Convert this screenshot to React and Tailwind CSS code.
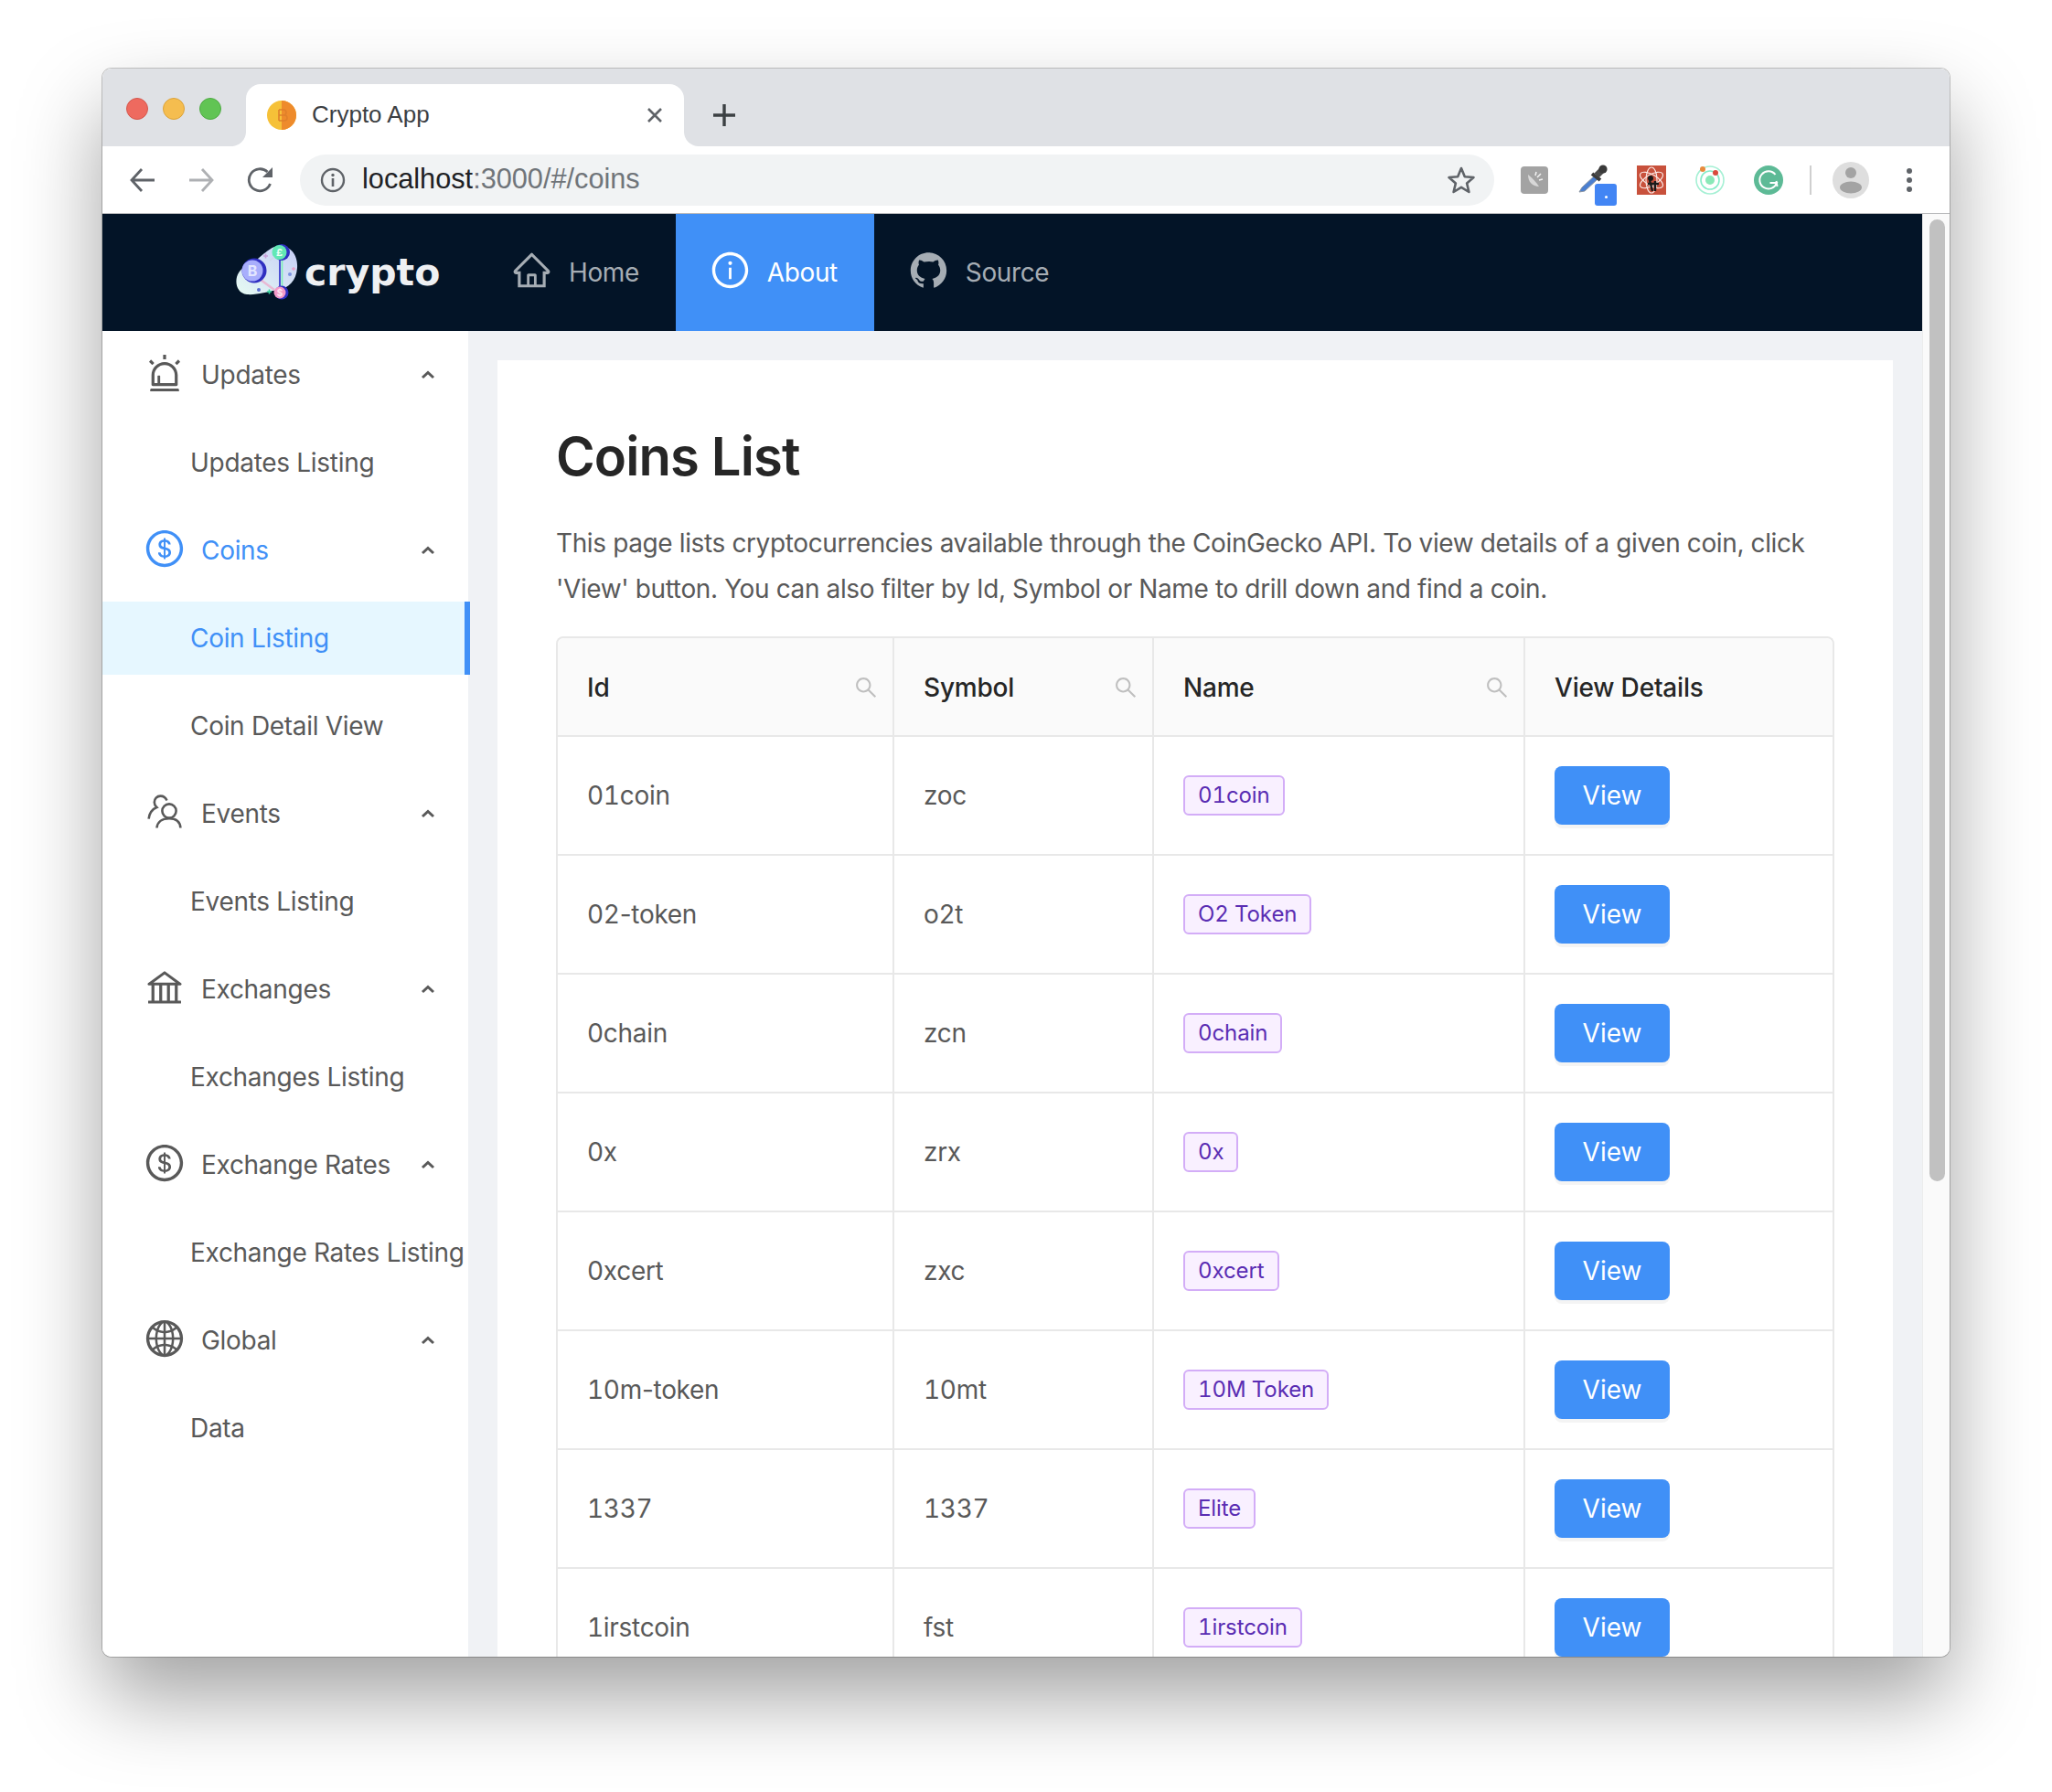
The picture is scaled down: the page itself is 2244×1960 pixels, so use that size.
import React from "react";
import { AiOutlineHome, AiOutlineInfoCircle, AiFillGithub, AiOutlineAlert, AiOutlineDollarCircle, AiOutlineBank, AiOutlineGlobal, AiOutlineSearch } from "react-icons/ai";

const Chevron = () => (
  <svg width="16" height="10" viewBox="0 0 16 10" fill="none" className="shrink-0">
    <path d="M2 8 L8 2.5 L14 8" stroke="#595959" strokeWidth="3" />
  </svg>
);

const EventsIcon = ({ className }) => (
  <svg viewBox="0 0 46 46" fill="none" stroke="currentColor" strokeWidth="2.6" className={className}>
    <g transform="translate(4 4)">
      <circle cx="24" cy="18" r="7.6" />
      <path d="M10.5 36.5 C11 30 16 26.2 24 26.2 C32 26.2 36 30 36.4 36.5" />
      <path d="M21.5 6.5 C20 3 17.5 1.6 14.5 1.6 C10.6 1.6 7.8 4.6 7.8 8.4 C7.8 10.6 8.8 12.6 10.4 14 C5.6 16 2.4 20.4 1.6 26.6" />
    </g>
  </svg>
);

const groups = [
  { label: "Updates", Icon: AiOutlineAlert, sub: "Updates Listing" },
  { label: "Coins", Icon: AiOutlineDollarCircle, sub: "Coin Listing", active: true, extra: "Coin Detail View" },
  { label: "Events", Icon: EventsIcon, sub: "Events Listing" },
  { label: "Exchanges", Icon: AiOutlineBank, sub: "Exchanges Listing" },
  { label: "Exchange Rates", Icon: AiOutlineDollarCircle, sub: "Exchange Rates Listing" },
  { label: "Global", Icon: AiOutlineGlobal, sub: "Data" },
];

const rows = [
  ["01coin", "zoc", "01coin"],
  ["02-token", "o2t", "O2 Token"],
  ["0chain", "zcn", "0chain"],
  ["0x", "zrx", "0x"],
  ["0xcert", "zxc", "0xcert"],
  ["10m-token", "10mt", "10M Token"],
  ["1337", "1337", "Elite"],
  ["1irstcoin", "fst", "1irstcoin"],
];

const GRID = "grid grid-cols-[368px_284px_406px_1fr]";

const Logo = () => (
  <svg width="68" height="62" viewBox="0 0 68 62" className="shrink-0">
    <defs>
      <linearGradient id="blob" x1="0" y1="1" x2="1" y2="0">
        <stop offset="0" stopColor="#e6fbf3" />
        <stop offset="1" stopColor="#c6cdf7" />
      </linearGradient>
    </defs>
    <path d="M48 2 C60 2 68 12 67 26 C66 40 58 48 46 50 C34 52 22 56 12 55 C2 54 -1 44 1 36 C3 28 10 24 18 20 C28 15 36 2 48 2 Z" fill="url(#blob)" />
    <line x1="48" y1="14" x2="48" y2="48" stroke="#3c3fd0" strokeWidth="1.8" />
    <line x1="50.5" y1="16" x2="50.5" y2="46" stroke="#7df0b8" strokeWidth="1.6" />
    <line x1="27" y1="39" x2="42" y2="50" stroke="#e8b9d4" strokeWidth="2.5" />
    <circle cx="20" cy="29" r="13.5" fill="#2f2fc0" />
    <circle cx="18" cy="29" r="11.5" fill="#a8aefc" />
    <text x="18" y="35" textAnchor="middle" fontSize="16" fontWeight="700" fill="#e3e6ff" fontFamily="Inter, sans-serif">B</text>
    <circle cx="50" cy="9" r="9" fill="#2f2fc0" />
    <circle cx="47.5" cy="9" r="8" fill="#62e8b4" />
    <text x="47.5" y="13" textAnchor="middle" fontSize="11" fontWeight="700" fill="#eafff6" fontFamily="Inter, sans-serif">£</text>
    <circle cx="50" cy="53" r="7.5" fill="#2f2fc0" />
    <circle cx="48" cy="53" r="6.5" fill="#f49ac8" />
    <text x="48" y="57" textAnchor="middle" fontSize="10" fontWeight="700" fill="#ffe6f3" fontFamily="Inter, sans-serif">$</text>
    <circle cx="25" cy="50" r="2" fill="#5a6fd0" />
    <path d="M34 52 h5 M36.5 49.5 v5" stroke="#3dd6a0" strokeWidth="1.6" />
    <path d="M30 13 h5 M32.5 10.5 v5" stroke="#c9a0d8" strokeWidth="1.6" />
    <circle cx="59" cy="33" r="2" fill="#7c93e0" />
    <path d="M37 18 L42 14" stroke="#cfd6ea" strokeWidth="1.2" />
    <path d="M61 27 h4 M63 25 v4" stroke="#e8a0c8" strokeWidth="1.4" />
  </svg>
);

const TrafficLight = ({ color, edge }) => (
  <span className={`w-6 h-6 rounded-full border ${color} ${edge}`} />
);

function BrowserChrome() {
  return (
    <>
      <div className="flex h-[85px] bg-white shrink-0">
        <div className="w-[157px] h-full bg-[#dfe1e5] rounded-br-[16px] flex items-start gap-4 pl-[26px] pt-[32px]">
          <TrafficLight color="bg-[#ee6a5f]" edge="border-[#d5574d]" />
          <TrafficLight color="bg-[#f5bd4f]" edge="border-[#dca33a]" />
          <TrafficLight color="bg-[#61c454]" edge="border-[#4fab44]" />
        </div>
        <div className="w-[479px] h-full bg-[#dfe1e5]">
          <div className="h-[68px] mt-[17px] bg-white rounded-t-[16px] flex items-center pl-[23px] pr-[22px]">
            <svg width="32" height="32" viewBox="0 0 32 32" className="shrink-0">
              <circle cx="16" cy="16" r="16" fill="#f6c138" />
              <path d="M16 0 A16 16 0 0 1 16 32 Z" fill="#ee8b2c" />
              <path d="M13 10 h5 a3 3 0 0 1 0 6 h-5 M13 16 h6 a3 3 0 0 1 0 6 h-6 M13 10 v12" fill="none" stroke="#e0802a" strokeWidth="1.6" />
            </svg>
            <span className="ml-[17px] -mt-[2px] flex-1 text-[26px] leading-none text-[#3c4043] font-['Liberation_Sans',sans-serif]">Crypto App</span>
            <svg width="18" height="18" viewBox="0 0 18 18" className="shrink-0 mr-[1px]">
              <path d="M2 2 L16 16 M16 2 L2 16" stroke="#5f6368" strokeWidth="2.6" />
            </svg>
          </div>
        </div>
        <div className="flex-1 h-full bg-[#dfe1e5] rounded-bl-[16px] flex items-center pl-[31px] pt-[17px]">
          <svg width="26" height="26" viewBox="0 0 26 26">
            <path d="M13 1 V25 M1 13 H25" stroke="#3c4043" strokeWidth="3.4" />
          </svg>
        </div>
      </div>
      <div className="flex items-center h-[74px] bg-white border-b border-[#b9babc] shrink-0">
        <svg width="30" height="30" viewBox="0 0 30 30" className="ml-[29px] shrink-0" fill="none" stroke="#5f6368" strokeWidth="2.8">
          <path d="M28 15 H3 M14 3 L3 15 L14 27" />
        </svg>
        <svg width="30" height="30" viewBox="0 0 30 30" className="ml-[34px] shrink-0" fill="none" stroke="#aeb0b3" strokeWidth="2.8">
          <path d="M2 15 H27 M16 3 L27 15 L16 27" />
        </svg>
        <svg width="30" height="30" viewBox="0 0 30 30" className="ml-[35px] shrink-0" fill="none" stroke="#5f6368" strokeWidth="2.8">
          <path d="M25.5 19 A12 12 0 1 1 22.5 6" />
          <path d="M28 1 V12 H17 Z" fill="#5f6368" stroke="none" />
        </svg>
        <div className="ml-[28px] w-[1306px] h-[56px] rounded-full bg-[#f1f3f4] flex items-center shrink-0">
          <svg width="28" height="28" viewBox="0 0 28 28" className="ml-[22px] shrink-0" fill="none">
            <circle cx="14" cy="14" r="12" stroke="#5f6368" strokeWidth="2.4" />
            <circle cx="14" cy="8.5" r="1.7" fill="#5f6368" />
            <path d="M14 12 V21" stroke="#5f6368" strokeWidth="2.6" />
          </svg>
          <span className="ml-[18px] text-[30.7px] leading-none text-[#202124] font-['Liberation_Sans',sans-serif]">
            localhost<span className="text-[#70757a]">:3000/#/coins</span>
          </span>
          <svg width="32" height="32" viewBox="0 0 32 32" className="ml-auto mr-[20px] shrink-0" fill="none">
            <path d="M16 3 L19.8 12.2 L29.5 13 L22.1 19.4 L24.4 29 L16 23.8 L7.6 29 L9.9 19.4 L2.5 13 L12.2 12.2 Z" stroke="#5f6368" strokeWidth="2.6" strokeLinejoin="round" />
          </svg>
        </div>
        <div className="ml-[29px] w-[30px] h-[30px] rounded-[4px] bg-[#a3a3a3] flex items-center justify-center shrink-0">
          <svg width="22" height="22" viewBox="0 0 22 22" fill="none" stroke="#f0f0f0" strokeWidth="1.6">
            <path d="M4 5 C4 13 9 18 16 18 C13 13 9 9 4 5 Z" fill="#d8d8d8" stroke="none" />
            <path d="M14 8 L18 4 M16 11 L20 10 M12 6 L13 2" />
          </svg>
        </div>
        <div className="ml-[30px] w-[47px] h-[64px] relative shrink-0">
          <svg width="47" height="64" viewBox="0 0 47 64" className="absolute left-0 top-0" fill="none">
            <path d="M4 45 L7 40 L21 27 L24 31 L10 44 Z" fill="#4a7fd1" stroke="#8a93a0" strokeWidth="1" />
            <path d="M18 25 L27 32" stroke="#3c3c3c" strokeWidth="4" />
            <path d="M23 27 L29 21" stroke="#4a4a4a" strokeWidth="7" />
            <circle cx="30" cy="20" r="4.6" fill="#3a3a3a" />
          </svg>
          <div className="absolute left-[21px] bottom-[4px] w-[24px] h-[24px] rounded-[3px] bg-[#4285f4] flex items-center justify-center">
            <span className="w-[3px] h-[3px] rounded-full bg-white mt-[6px]" />
          </div>
        </div>
        <div className="ml-[20px] w-[32px] h-[32px] bg-[#c8513c] flex items-center justify-center shrink-0">
          <svg width="32" height="32" viewBox="0 0 32 32" fill="none">
            <ellipse cx="16" cy="16" rx="14" ry="6" stroke="#fbe9e5" strokeWidth="1.2" transform="rotate(30 16 16)" />
            <ellipse cx="16" cy="16" rx="14" ry="6" stroke="#fbe9e5" strokeWidth="1.2" transform="rotate(-30 16 16)" />
            <ellipse cx="16" cy="16" rx="14" ry="6" stroke="#fbe9e5" strokeWidth="1.2" transform="rotate(90 16 16)" />
            <circle cx="15" cy="14" r="3" fill="#1a1a1a" />
            <path d="M14 16 L17 28 M20 17 L20 28 M12 20 L24 20" stroke="#1a1a1a" strokeWidth="2.4" />
          </svg>
        </div>
        <svg width="32" height="32" viewBox="0 0 32 32" className="ml-[32px] shrink-0" fill="none">
          <circle cx="16" cy="16" r="15" stroke="#a5f0d4" strokeWidth="1.6" />
          <circle cx="16" cy="16" r="10" stroke="#85ecc8" strokeWidth="1.6" />
          <circle cx="16" cy="16" r="5" fill="#8ae8b8" />
          <circle cx="8" cy="4" r="3" fill="#e88a3c" />
          <circle cx="22" cy="8" r="3" fill="#d94a3c" />
        </svg>
        <svg width="32" height="32" viewBox="0 0 32 32" className="ml-[32px] shrink-0" fill="none">
          <circle cx="16" cy="16" r="16" fill="#5dba96" />
          <path d="M23.5 10 A9.6 9.6 0 1 0 25 19 H17.5" stroke="#fff" strokeWidth="2" />
          <path d="M24.5 17 L25.5 23" stroke="#fff" strokeWidth="2" />
        </svg>
        <div className="ml-[29px] w-[2px] h-[32px] bg-[#cfcfcf] shrink-0" />
        <svg width="40" height="40" viewBox="0 0 40 40" className="ml-[23px] shrink-0">
          <circle cx="20" cy="20" r="20" fill="#dedede" />
          <circle cx="20" cy="12" r="6" fill="#a3a3a3" />
          <ellipse cx="20" cy="28" rx="12" ry="6.5" fill="#a3a3a3" />
        </svg>
        <div className="ml-[41px] flex flex-col gap-[4px] shrink-0">
          <span className="w-[6px] h-[6px] rounded-full bg-[#5f6368]" />
          <span className="w-[6px] h-[6px] rounded-full bg-[#5f6368]" />
          <span className="w-[6px] h-[6px] rounded-full bg-[#5f6368]" />
        </div>
      </div>
    </>
  );
}

const NavItem = ({ Icon, label, active }) => (
  <div className={`h-full flex items-center px-10 gap-[21px] ${active ? "bg-[#4090f7] text-white" : "text-[#a6adb4]"}`}>
    <Icon className="w-[45px] h-[45px] -mx-[3px] -mt-[5px] shrink-0" />
    <span className="text-[28px] leading-none tracking-[-0.4px]">{label}</span>
  </div>
);

function Sidebar() {
  return (
    <aside className="w-[400px] shrink-0 bg-white pt-2 text-[28px] text-[#595959] tracking-[-0.3px]">
      {groups.map((g) => (
        <div key={g.label}>
          <div className={`h-[80px] mb-4 flex items-center pl-[48px] pr-[36px] ${g.active ? "text-[#4090f7]" : ""}`}>
            <g.Icon className="w-[46px] h-[46px] -mx-[3px] -mt-[5px] shrink-0" />
            <span className="ml-[20px] flex-1 leading-none whitespace-nowrap">{g.label}</span>
            <Chevron />
          </div>
          <div
            className={`h-[80px] mb-4 flex items-center pl-[96px] whitespace-nowrap ${
              g.active ? "w-[402px] bg-[#e6f7ff] text-[#4090f7] border-r-[6px] border-[#4090f7]" : ""
            }`}
          >
            {g.sub}
          </div>
          {g.extra && <div className="h-[80px] mb-4 flex items-center pl-[96px]">{g.extra}</div>}
        </div>
      ))}
    </aside>
  );
}

const HeadCell = ({ label, search }) => (
  <div className={`h-full flex items-center justify-between pl-[32px] pr-[15px] ${search ? "border-r-2 border-[#e8e8e8]" : ""}`}>
    <span className="mt-[2px] text-[28px] font-medium text-[#262626] leading-none tracking-[-0.2px]">{label}</span>
    {search && <AiOutlineSearch className="mt-[2px] w-[28px] h-[28px] text-[#bfbfbf] shrink-0" />}
  </div>
);

const IdText = ({ id }) => {
  const parts = id.split("-");
  if (parts.length < 2) return id;
  return (
    <span>
      {parts[0]}
      <span className="[font-variant-numeric:normal]">-</span>
      {parts[1]}
    </span>
  );
};

function CoinTable() {
  return (
    <div className="mt-[27px] border-2 border-[#e8e8e8] rounded-t-[8px] border-b-0 text-[28px] text-[#595959] tabular-nums">
      <div className={`${GRID} h-[108px] bg-[#fafafa] border-b-2 border-[#e8e8e8] rounded-t-[8px]`}>
        <HeadCell label="Id" search />
        <HeadCell label="Symbol" search />
        <HeadCell label="Name" search />
        <HeadCell label="View Details" />
      </div>
      {rows.map(([id, sym, name]) => (
        <div key={id} className={`${GRID} h-[130px] border-b-2 border-[#e8e8e8]`}>
          <div className="flex items-center pl-[32px] border-r-2 border-[#e8e8e8] tracking-[-0.3px]"><IdText id={id} /></div>
          <div className="flex items-center pl-[32px] border-r-2 border-[#e8e8e8] tracking-[-0.3px]">{sym}</div>
          <div className="flex items-center pl-[32px] border-r-2 border-[#e8e8e8]">
            <span className="h-[44px] px-[14px] flex items-center bg-[#f9f0ff] border-2 border-[#d3adf7] rounded-[6px] text-[24px] tracking-[-0.1px] text-[#5a2db3]">
              {name}
            </span>
          </div>
          <div className="flex items-center pl-[32px]">
            <button className="w-[126px] h-[64px] rounded-[8px] bg-[#4090f7] text-white text-[28px] shadow-[0_4px_0_rgba(0,0,0,0.045)]">
              View
            </button>
          </div>
        </div>
      ))}
    </div>
  );
}

export default function App() {
  return (
    <div className="h-[1960px] bg-white overflow-hidden pl-[112px] pt-[75px] font-['Inter',sans-serif]">
      <div className="w-[2020px] h-[1737px] rounded-[10px] overflow-hidden flex flex-col bg-white shadow-[0_0_0_1px_rgba(0,0,0,0.22),0_44px_90px_rgba(0,0,0,0.37)]">
        <BrowserChrome />
        <div className="flex-1 min-h-0 flex">
          <div className="flex-1 min-w-0 flex flex-col">
            <header className="h-[128px] shrink-0 bg-[#031427] flex items-center">
              <div className="w-[410px] h-full pl-[146px] flex items-center gap-[7px]">
                <Logo />
                <span className="text-[41px] leading-none font-bold text-[#eef0f3] font-['DejaVu_Sans',sans-serif]">crypto</span>
              </div>
              <NavItem Icon={AiOutlineHome} label="Home" />
              <NavItem Icon={AiOutlineInfoCircle} label="About" active />
              <NavItem Icon={AiFillGithub} label="Source" />
            </header>
            <div className="flex-1 min-h-0 flex bg-[#f0f2f5] overflow-hidden">
              <Sidebar />
              <main className="flex-1 min-w-0 px-8 pt-8">
                <div className="bg-white h-[1600px] px-[64px] pt-[67px] pb-[64px]">
                  <h1 className="text-[58px] leading-[76px] font-semibold text-[#262626] tracking-[-0.9px]">Coins List</h1>
                  <p className="mt-[32px] text-[28px] leading-[50px] text-[#595959] tracking-[-0.38px]">
                    This page lists cryptocurrencies available through the CoinGecko API. To view details of a given coin, click
                    <br />
                    'View' button. You can also filter by Id, Symbol or Name to drill down and find a coin.
                  </p>
                  <CoinTable />
                </div>
              </main>
            </div>
          </div>
          <div className="w-[30px] shrink-0 bg-[#fafafa] border-l border-[#ececec] pl-[7px] pt-[6px]">
            <div className="w-[17px] h-[1052px] rounded-full bg-[#c1c1c1]" />
          </div>
        </div>
      </div>
    </div>
  );
}
